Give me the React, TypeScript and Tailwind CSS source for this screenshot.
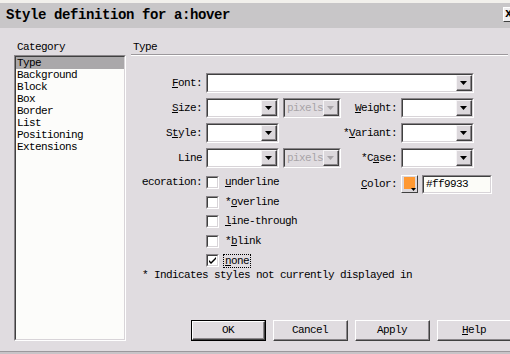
import React from "react";

const mono = { fontFamily: '"Liberation Mono", "DejaVu Sans Mono", monospace' };

function Arrow({ disabled }: { disabled?: boolean }) {
  return (
    <svg width="7" height="4" viewBox="0 0 7 4">
      <path d="M0 0h7L3.5 4z" fill={disabled ? "#a8a4a8" : "#000"} />
    </svg>
  );
}

function DropBtn({ disabled }: { disabled?: boolean }) {
  return (
    <div className="flex w-[16px] border border-t-[#f6f4f6] border-l-[#f6f4f6] border-b-[#404040] border-r-[#404040]">
      <div className="flex flex-1 items-center justify-center border-b border-r border-b-[#8a868a] border-r-[#8a868a] bg-[#dcd8dc]">
        <Arrow disabled={disabled} />
      </div>
    </div>
  );
}

function Sunken({ className, inner, children }: { className: string; inner: string; children?: React.ReactNode }) {
  return (
    <div className={`flex border border-t-[#8a868a] border-l-[#8a868a] border-b-white border-r-white ${className}`}>
      <div className={`flex flex-1 border border-t-[#404040] border-l-[#404040] border-b-[#d8d4d8] border-r-[#d8d4d8] ${inner}`}>
        {children}
      </div>
    </div>
  );
}

function Combo({ w, disabled, text }: { w: string; disabled?: boolean; text?: string }) {
  return (
    <Sunken className={`h-[20px] ${w}`} inner={disabled ? "bg-[#e0dce0]" : "bg-white"}>
      <div className="flex flex-1 items-center pl-[2px] leading-[14px] text-[#a8a4a8]">{text}</div>
      <DropBtn disabled={disabled} />
    </Sunken>
  );
}

function Label({ w, children }: { w: string; children: React.ReactNode }) {
  return (
    <div className={`flex h-[20px] shrink-0 items-center justify-end overflow-hidden whitespace-nowrap ${w}`}>{children}</div>
  );
}

function Check({ checked, label, focus }: { checked?: boolean; label: React.ReactNode; focus?: boolean }) {
  return (
    <div className="flex h-[19.5px] items-start">
      <Sunken className="h-[13px] w-[13px]" inner="bg-white items-center justify-center">
        {checked && (
          <svg width="7" height="7" viewBox="0 0 7 7">
            <path d="M0 3l2 2 5-5v2l-5 5-2-2z" fill="#000" />
          </svg>
        )}
      </Sunken>
      <div
        className={`ml-[4px] h-[14px] leading-[12px] ${focus ? "border border-dotted border-black px-[1px]" : "px-[2px]"}`}
      >
        {label}
      </div>
    </div>
  );
}

function Btn({ children, def }: { children: React.ReactNode; def?: boolean }) {
  return (
    <div className={`flex h-[21px] w-[75px] ${def ? "border border-black" : ""}`}>
      <div className="flex flex-1 border border-t-white border-l-white border-b-[#404040] border-r-[#404040]">
        <div className="flex flex-1 items-center justify-center border-b border-r border-b-[#8a868a] border-r-[#8a868a] bg-[#e0dce0]">
          {children}
        </div>
      </div>
    </div>
  );
}

export default function App() {
  const cats = ["Type", "Background", "Block", "Box", "Border", "List", "Positioning", "Extensions"];
  return (
    <div className="flex h-[354px] w-[510px] flex-col overflow-hidden bg-[#e0dce0] text-[11px] tracking-[-0.6px] text-black" style={mono}>
      <div className="h-[3px] bg-[#f2f0ec]" />
      <div className="flex h-[25px] items-center bg-[#c8c6c8] pl-[6px]">
        <span className="text-[14px] font-bold tracking-[-0.4px]">Style definition for a:hover</span>
        <div className="ml-auto mr-[-10px] mt-[-3px] flex h-[15px] w-[17px] items-center justify-start border border-t-white border-l-white border-b-[#404040] border-r-[#404040] bg-[#f0eef0] pl-[1px] text-[12px] font-bold">
          x
        </div>
      </div>

      <div className="flex h-[323px] pt-[12px]">
        <div className="flex w-[131px] shrink-0 flex-col pl-[14px]">
          <div className="h-[15px] pl-[3px] leading-[15px]">Category</div>
          <Sunken className="h-[286px] w-[112px]" inner="flex-col bg-[#fcfcfa]">
            {cats.map((c, i) => (
              <div key={c} className={`h-[12px] pl-[1px] leading-[12px] ${i === 0 ? "bg-[#aaa8aa]" : ""}`}>
                {c}
              </div>
            ))}
          </Sunken>
        </div>

        <div className="flex flex-1 flex-col">
          <div className="h-[14px] pl-[2px] leading-[14px]">Type</div>
          <div className="mr-[4px] h-[1px] bg-[#9c989c]" />
          <div className="mr-[4px] h-[1px] bg-white" />

          <div className="mt-[17px] flex flex-col gap-[5px] pl-[11px]">
            <div className="flex">
              <Label w="w-[60px]">
                <span><u>F</u>ont:</span>
              </Label>
              <div className="ml-[4px]">
                <Combo w="w-[268px]" />
              </div>
            </div>
            <div className="flex">
              <Label w="w-[60px]">
                <span><u>S</u>ize:</span>
              </Label>
              <div className="ml-[4px] flex">
                <Combo w="w-[73px]" />
                <div className="ml-[4px]">
                  <Combo w="w-[58px]" disabled text="pixels" />
                </div>
              </div>
              <Label w="w-[56px]">
                <span><u>W</u>eight:</span>
              </Label>
              <div className="ml-[4px]">
                <Combo w="w-[73px]" />
              </div>
            </div>
            <div className="flex">
              <Label w="w-[60px]">
                <span>S<u>t</u>yle:</span>
              </Label>
              <div className="ml-[4px] w-[135px]">
                <Combo w="w-[73px]" />
              </div>
              <Label w="w-[56px]">
                <span>*<u>V</u>ariant:</span>
              </Label>
              <div className="ml-[4px]">
                <Combo w="w-[73px]" />
              </div>
            </div>
            <div className="flex">
              <Label w="w-[60px]">
                <span>Line</span>
              </Label>
              <div className="ml-[4px] flex">
                <Combo w="w-[73px]" />
                <div className="ml-[4px]">
                  <Combo w="w-[58px]" disabled text="pixels" />
                </div>
              </div>
              <Label w="w-[56px]">
                <span>*C<u>a</u>se:</span>
              </Label>
              <div className="ml-[4px]">
                <Combo w="w-[73px]" />
              </div>
            </div>
          </div>

          <div className="mt-[8px] flex pl-[11px]">
            <div className="flex h-[13px] w-[60px] shrink-0 items-center justify-end overflow-hidden whitespace-nowrap">
              Decoration:
            </div>
            <div className="ml-[4px] flex w-[135px] flex-col">
              <Check label={<span><u>u</u>nderline</span>} />
              <Check label={<span>*<u>o</u>verline</span>} />
              <Check label={<span><u>l</u>ine-through</span>} />
              <Check label={<span>*<u>b</u>link</span>} />
              <div className="h-[13px] overflow-visible">
                <Check checked focus label={<span><u>n</u>one</span>} />
              </div>
            </div>
            <div className="-mt-[1px] flex h-[19px] w-[56px] shrink-0 items-center justify-end">
              <span><u>C</u>olor:</span>
            </div>
            <div className="-mt-[1px] ml-[4px] flex h-[18px] w-[17px] border border-t-white border-l-white border-b-[#404040] border-r-[#404040] bg-[#dcd8dc]">
              <div className="relative flex-1 pl-[2px] pt-[1px]">
                <div className="h-[12px] w-[11px] bg-[#ff9933]" />
                <svg className="absolute bottom-[1px] right-[1px]" width="5" height="3" viewBox="0 0 5 3">
                  <path d="M0 0h5L2.5 3z" fill="#000" />
                </svg>
              </div>
            </div>
            <div className="-mt-[1px] ml-[4px]">
              <Sunken className="h-[19px] w-[70px]" inner="bg-[#fcfcf8] items-center pl-[2px]">
                #ff9933
              </Sunken>
            </div>
          </div>

          <div className="mt-[2px] h-[12px] pl-[11px] leading-[12px]">* Indicates styles not currently displayed in</div>

          <div className="ml-[60px] mt-[39px] flex gap-[7px]">
            <Btn def>OK</Btn>
            <Btn>Cancel</Btn>
            <Btn>Apply</Btn>
            <Btn>
              <span><u>H</u>elp</span>
            </Btn>
          </div>
        </div>
      </div>
      <div className="h-[1px] bg-[#9c989c]" />
      <div className="flex-1 bg-[#c8c4c8]" />
    </div>
  );
}
